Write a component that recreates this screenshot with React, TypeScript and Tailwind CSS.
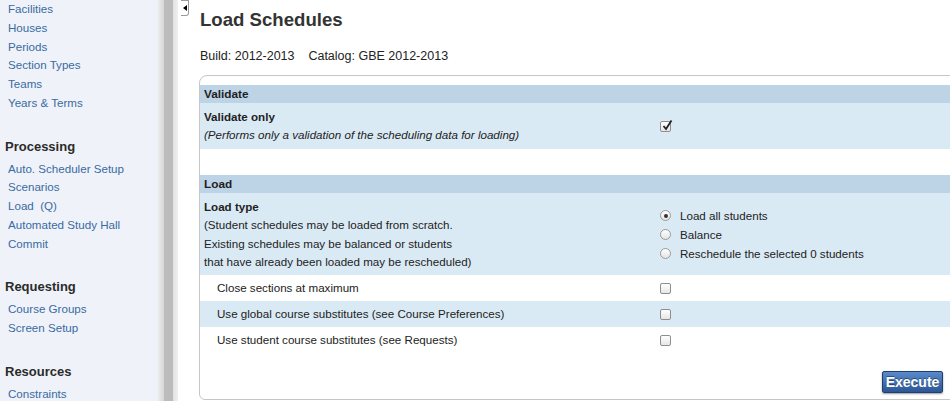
import React from 'react';

const font = { fontFamily: '"Liberation Sans", Arial, sans-serif' };

type Group = { title?: string; items: string[] };

const groups: Group[] = [
  { items: ['Facilities', 'Houses', 'Periods', 'Section Types', 'Teams', 'Years & Terms'] },
  { title: 'Processing', items: ['Auto. Scheduler Setup', 'Scenarios', 'Load  (Q)', 'Automated Study Hall', 'Commit'] },
  { title: 'Requesting', items: ['Course Groups', 'Screen Setup'] },
  { title: 'Resources', items: ['Constraints'] },
];

const Checkbox: React.FC<{ checked?: boolean }> = ({ checked }) => (
  <div className="relative w-[11px] h-[11px] rounded-[2px] border border-[#8e8e8e] bg-gradient-to-b from-white to-[#e6e6e6]">
    {checked && (
      <svg className="absolute -top-[3px] left-[1px]" width="11" height="12" viewBox="0 0 11 12">
        <path d="M1.5 7 L4 10 L9.5 1.5" fill="none" stroke="#222" strokeWidth="1.8" />
      </svg>
    )}
  </div>
);

const Radio: React.FC<{ checked?: boolean }> = ({ checked }) => (
  <div className="w-[11px] h-[11px] rounded-full border border-[#9a9a9a] bg-gradient-to-b from-white to-[#e4e4e4] flex items-center justify-center">
    {checked && <div className="w-[4px] h-[4px] rounded-full bg-[#333]" />}
  </div>
);

const Sidebar: React.FC = () => (
  <div className="w-[158px] shrink-0 bg-[#eff3f9] h-full">
    {groups.map((g, i) => (
      <div key={i}>
        {g.title && (
          <div className="mt-[25px] mb-[4px] pl-[5px] h-[18px] leading-[18px] text-[13px] font-bold text-[#2b2b2b]">
            {g.title}
          </div>
        )}
        {g.items.map((it) => (
          <div key={it} className="pl-[8px] leading-[18.75px] text-[11.6px] text-[#3a6aa2] whitespace-pre">
            {it}
          </div>
        ))}
      </div>
    ))}
  </div>
);

const Splitter: React.FC = () => (
  <div className="w-[22px] shrink-0 flex h-full">
    <div className="w-[6px] bg-gradient-to-r from-[#ececec] to-[#d6d6d6]" />
    <div className="w-[9px] bg-[#bcbcbc]" />
    <div className="w-[5px] bg-gradient-to-r from-[#e2e2e2] to-[#f0f0f0]" />
    <div className="w-[2px] bg-white" />
  </div>
);

const HeaderBar: React.FC<{ label: string }> = ({ label }) => (
  <div className="h-[18px] bg-[#bdd3e6] pl-[4px] text-[11.8px] font-bold leading-[18px] text-[#1f1f1f]">{label}</div>
);

const OptionRow: React.FC<{ label: string; shaded?: boolean }> = ({ label, shaded }) => (
  <div className={`h-[26px] flex items-center ${shaded ? 'bg-[#daeaf5]' : 'bg-white'}`}>
    <div className="w-[460px] pl-[17px] text-[11.6px] text-[#222]">{label}</div>
    <Checkbox />
  </div>
);

export default function App() {
  return (
    <div className="w-[950px] h-[401px] flex overflow-hidden bg-white" style={font}>
      <Sidebar />
      <Splitter />
      <div className="relative flex-1 min-w-0">
        <div className="absolute left-[1px] top-0 w-[8px] h-[16px] bg-white border border-l-0 border-[#9a9a9a] rounded-br-[3px] flex items-center justify-center">
          <div className="w-0 h-0 border-y-[3px] border-y-transparent border-r-[4px] border-r-black" />
        </div>
        <div className="pl-[20px] pt-[8px] text-[18.6px] font-bold leading-[24px] text-[#333]">Load Schedules</div>
        <div className="pl-[20px] mt-[17px] text-[12.5px] leading-[15px] text-[#222] whitespace-pre">
          {'Build: 2012-2013    Catalog: GBE 2012-2013'}
        </div>
        <div className="ml-[19px] mt-[11px] w-[780px] h-[325px] border border-[#c6c6c6] rounded-tl-[8px] rounded-bl-[6px] pt-[9px] relative">
          <HeaderBar label="Validate" />
          <div className="h-[46px] bg-[#daeaf5] flex items-center">
            <div className="w-[460px] pl-[4px] text-[11.6px] leading-[18px] text-[#222]">
              <div className="font-bold">Validate only</div>
              <div className="italic">(Performs only a validation of the scheduling data for loading)</div>
            </div>
            <Checkbox checked />
          </div>
          <div className="h-[26px]" />
          <HeaderBar label="Load" />
          <div className="h-[82px] bg-[#daeaf5] flex">
            <div className="w-[460px] pl-[4px] pt-[5px] text-[11.6px] leading-[18.4px] text-[#222]">
              <div className="font-bold">Load type</div>
              <div>(Student schedules may be loaded from scratch.</div>
              <div>Existing schedules may be balanced or students</div>
              <div>that have already been loaded may be rescheduled)</div>
            </div>
            <div className="pt-[13px] text-[11.6px] leading-[19px] text-[#222]">
              {['Load all students', 'Balance', 'Reschedule the selected 0 students'].map((t, i) => (
                <div key={t} className="flex items-center gap-[9px]">
                  <Radio checked={i === 0} />
                  <span>{t}</span>
                </div>
              ))}
            </div>
          </div>
          <OptionRow label="Close sections at maximum" />
          <OptionRow label="Use global course substitutes (see Course Preferences)" shaded />
          <OptionRow label="Use student course substitutes (see Requests)" />
          <div className="absolute left-[682px] top-[295px] w-[61px] h-[22px] rounded-[2px] border border-[#1f3f70] bg-gradient-to-b from-[#5a8acb] to-[#2c5796] shadow-[0_1px_2px_rgba(0,0,0,0.4)] flex items-center justify-center text-[14px] font-bold text-white [text-shadow:0_-1px_0_rgba(0,0,0,0.4)]">
            Execute
          </div>
        </div>
      </div>
    </div>
  );
}
